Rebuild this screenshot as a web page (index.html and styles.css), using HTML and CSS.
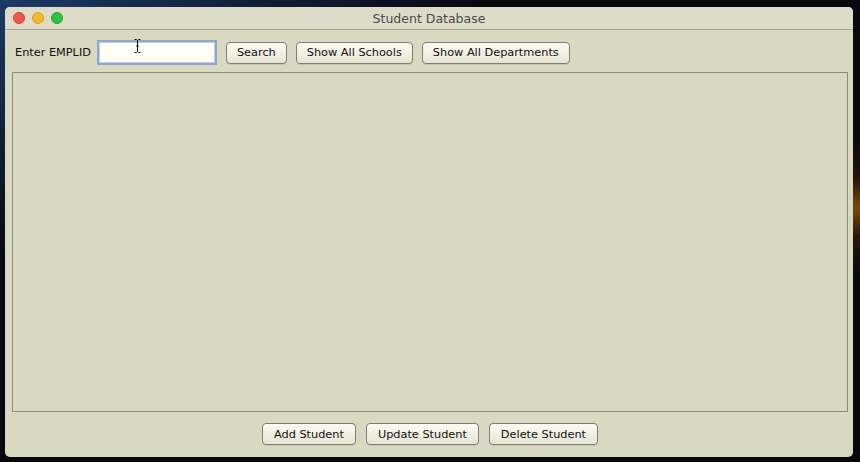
FILE: index.html
```html
<!DOCTYPE html>
<html lang="en">

<head>
    <meta charset="UTF-8">
    <meta name="viewport" content="width=device-width, initial-scale=1.0">
    <title>Student Database</title>
    <link rel="stylesheet" href="styles.css">
</head>

<body>
    <div class="ventana">
        <div class="barra-titulo">
            <div class="semaforo">
                <span class="luz roja"></span>
                <span class="luz amarilla"></span>
                <span class="luz verde"></span>
            </div>
            <div class="titulo">Student Database</div>
        </div>

        <div class="barra-busqueda">
            <label for="emplid">Enter EMPLID</label>
            <div class="campo">
                <input type="text" id="emplid" name="emplid">
                <svg class="cursor" width="7" height="14" viewBox="0 0 7 14">
                    <path d="M0.5 0.5 H2.5 L3.5 1.5 L4.5 0.5 H6.5 M3.5 1.5 V12.5 M0.5 13.5 H2.5 L3.5 12.5 L4.5 13.5 H6.5 M2 7 H5" stroke="#111" stroke-width="1" fill="none"/>
                </svg>
            </div>
            <button class="boton-buscar">Search</button>
            <button class="boton-escuelas">Show All Schools</button>
            <button class="boton-departamentos">Show All Departments</button>
        </div>

        <div class="panel"></div>

        <div class="grupo-botones">
            <button class="boton-agregar">Add Student</button>
            <button class="boton-actualizar">Update Student</button>
            <button class="boton-borrar">Delete Student</button>
        </div>
    </div>
</body>

</html>
```

FILE: styles.css
```css
body {
    margin: 0;
    padding: 7px 7px 5px 5px;
    font-family: "DejaVu Sans", sans-serif;
    font-size: 11.3px;
    background:
        radial-gradient(ellipse at 100% 45%, #7a4a10 0%, rgba(60, 30, 5, 0.6) 8%, transparent 20%),
        radial-gradient(ellipse at 0% 0%, #1d3a66 0%, transparent 40%),
        #06080e;
    height: 462px;
    box-sizing: border-box;
    overflow: hidden;
}

.ventana {
    width: 848px;
    height: 450px;
    background-color: #d9d8c1;
    border-radius: 5px;
    display: flex;
    flex-direction: column;
    overflow: hidden;
}

.barra-titulo {
    height: 22px;
    display: flex;
    align-items: center;
    position: relative;
    background-color: #dedcc8;
    border-bottom: 1px solid #a9a89a;
}

.semaforo {
    display: flex;
    gap: 7px;
    padding-left: 8px;
}

.luz {
    width: 12px;
    height: 12px;
    border-radius: 50%;
    box-sizing: border-box;
}

.roja {
    background-color: #f2554c;
    border: 1px solid #d9403a;
}

.amarilla {
    background-color: #f6b731;
    border: 1px solid #d99d21;
}

.verde {
    background-color: #2fc43e;
    border: 1px solid #22a22e;
}

.titulo {
    position: absolute;
    left: 0;
    right: 0;
    text-align: center;
    font-size: 12.5px;
    color: #4a4a48;
}

.barra-busqueda {
    height: 42px;
    display: flex;
    align-items: center;
    padding: 3px 0 0 10px;
    box-sizing: border-box;
}

.barra-busqueda label {
    margin-right: 6px;
    color: #111111;
}

.campo {
    position: relative;
    margin-right: 9px;
}

.campo input {
    width: 120px;
    height: 25px;
    box-sizing: border-box;
    border: 2px solid #8ea8cf;
    outline: 1px solid #bccde4;
    outline-offset: -3px;
    background-color: #fffff6;
    display: block;
}

.cursor {
    position: absolute;
    left: 37px;
    top: -1px;
}

button {
    height: 22px;
    padding: 0 11px;
    font-family: "DejaVu Sans", sans-serif;
    font-size: 11.3px;
    color: #111111;
    background: linear-gradient(#fbfbf2, #e6e5d3);
    border: 1px solid #7e7e78;
    border-radius: 4px;
    box-shadow: 0 1px 0 rgba(0, 0, 0, 0.08);
}

.barra-busqueda button {
    margin-right: 9px;
    padding: 0 10px;
}

.panel {
    height: 338px;
    margin: 0 5px 0 7px;
    border: 1px solid #8d8c84;
}

.grupo-botones {
    flex: 1;
    display: flex;
    justify-content: center;
    align-items: center;
    gap: 10px;
    padding: 0 0 1px 2px;
}
```
